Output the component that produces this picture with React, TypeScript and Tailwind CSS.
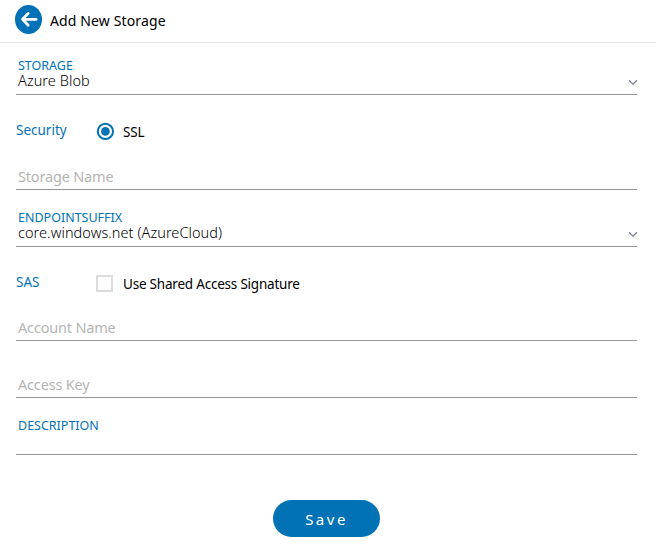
import type { ReactNode } from "react";

function Chevron() {
  return (
    <svg width="10" height="7" viewBox="0 0 10 7" className="-mr-px mb-[8px] shrink-0" fill="none" stroke="#7d8590" strokeWidth="1.3">
      <path d="M1 1.2 5 5.2 9 1.2" />
    </svg>
  );
}

function SelectField({ label, value, top }: { label: string; value: string; top: string }) {
  return (
    <div className={`flex h-[52px] items-end justify-between border-b border-[#969696] ${top}`}>
      <div className="flex flex-col pl-[2px]">
        <span className="text-[12.5px] leading-[15px] text-[#0072b5]">{label}</span>
        <span className="mb-[6px] text-[14.5px] font-light leading-[15px] tracking-[0.06px] text-black">{value}</span>
      </div>
      <Chevron />
    </div>
  );
}

function TextField({ placeholder, height }: { placeholder: string; height: string }) {
  return (
    <div className={`flex items-end border-b border-[#969696] pl-[2px] ${height}`}>
      <span className="mb-[4px] text-[14.5px] leading-[18px] tracking-[-0.18px] text-[#b4b4b4]">{placeholder}</span>
    </div>
  );
}

function OptionRow({ label, text, control }: { label: string; text: string; control: ReactNode }) {
  return (
    <div className="flex h-[20px] items-start">
      <span className="-mt-px w-[80px] shrink-0 text-[13.5px] leading-[18px] text-[#0072b5]">{label}</span>
      {control}
      <span className="ml-[10px] mt-px text-[13.5px] leading-[18px] tracking-[-0.21px] text-black">{text}</span>
    </div>
  );
}

export default function App() {
  return (
    <div className="h-[552px] w-[656px] overflow-hidden whitespace-nowrap bg-white font-['Noto_Sans',sans-serif]">
      <header className="flex h-[43px] items-start border-b border-[#e3e3e3] pl-[15px] pt-[5px]">
        <svg width="27" height="29" viewBox="0 0 27 29" fill="none">
          <ellipse cx="13.5" cy="14.5" rx="13.5" ry="14.5" fill="#0072b5" />
          <path d="M13.2 8.4 7.5 14.3l5.7 5.9M7.8 14.3h13.4" stroke="#fff" strokeWidth="2.8" strokeLinecap="round" strokeLinejoin="round" />
        </svg>
        <h1 className="ml-[8px] mt-[6px] text-[14px] leading-[20px] tracking-[0.13px] text-black">Add New Storage</h1>
      </header>
      <main className="ml-[16px] w-[621px]">
        <SelectField label="STORAGE" value="Azure Blob" top="" />
        <div className="pt-[27px]">
          <OptionRow
            label="Security"
            text="SSL"
            control={
              <svg width="17" height="17" viewBox="0 0 17 17" className="mt-[1px] shrink-0 overflow-visible" fill="none">
                <circle cx="9.4" cy="8.4" r="7.6" stroke="#0072b5" strokeWidth="2" />
                <circle cx="9.4" cy="8.4" r="4.3" fill="#0072b5" />
              </svg>
            }
          />
        </div>
        <TextField placeholder="Storage Name" height="h-[48px]" />
        <SelectField label="ENDPOINTSUFFIX" value="core.windows.net (AzureCloud)" top="mt-[5px]" />
        <div className="pt-[27px]">
          <OptionRow
            label="SAS"
            text="Use Shared Access Signature"
            control={<span className="mt-[1px] size-[17px] shrink-0 border-2 border-[#dcdcdc]" />}
          />
        </div>
        <TextField placeholder="Account Name" height="h-[47px]" />
        <TextField placeholder="Access Key" height="h-[57px]" />
        <div className="flex h-[57px] items-start border-b border-[#969696] pl-[2px] pt-[19px]">
          <span className="text-[12.5px] leading-[18px] text-[#0072b5]">DESCRIPTION</span>
        </div>
      </main>
      <div className="flex pl-[273px] pt-[45px]">
        <button className="h-[37px] w-[107px] rounded-[18.5px] bg-[#0072b5] text-[15px] leading-[38px] tracking-[2.5px] text-white">Save</button>
      </div>
    </div>
  );
}
